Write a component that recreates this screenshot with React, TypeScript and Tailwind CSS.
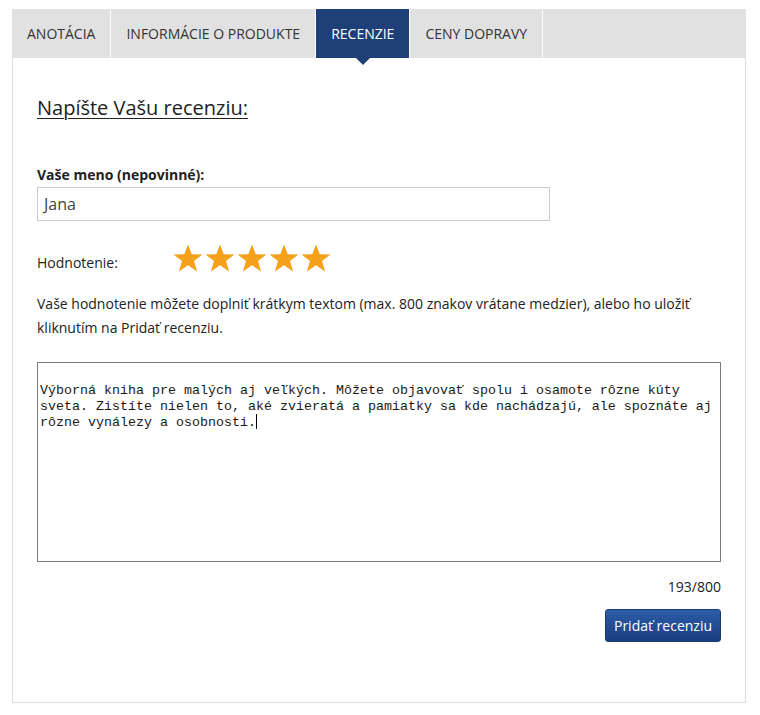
import { useState } from "react";

const tabs = ["ANOTÁCIA", "INFORMÁCIE O PRODUKTE", "RECENZIE", "CENY DOPRAVY"];

const reviewText =
  "Výborná kniha pre malých aj veľkých. Môžete objavovať spolu i osamote rôzne kúty sveta. Zistíte nielen to, aké zvieratá a pamiatky sa kde nachádzajú, ale spoznáte aj rôzne vynálezy a osobnosti.";

function Star() {
  return (
    <svg width="32" height="30" viewBox="0 0 32 30">
      <path
        d="M16 1.5 L19.7 11.3 L30.4 11.6 L22 18.1 L25 28.4 L16 22.3 L7 28.4 L10 18.1 L1.6 11.6 L12.3 11.3 Z"
        fill="#f4a11d"
      />
    </svg>
  );
}

export default function App() {
  const [active, setActive] = useState("RECENZIE");
  const [name] = useState("Jana");

  return (
    <div
      className="min-h-[715px] bg-white pt-[9px] pl-[12px]"
      style={{ fontFamily: "'Open Sans', 'Liberation Sans', sans-serif" }}
    >
      <div className="w-[734px]">
        {/* tabs */}
        <div className="flex h-[49px] bg-[#e1e1e1]">
          {tabs.map((t) => {
            const on = t === active;
            return (
              <button
                type="button"
                key={t}
                onClick={() => setActive(t)}
                className={
                  on
                    ? "relative flex items-center px-[15px] border-r border-white bg-[#1e3f78] text-white text-[14px]"
                    : "relative flex items-center px-[15px] border-r border-white text-[#333] text-[14px]"
                }
              >
                {t}
                {on && (
                  <span className="absolute left-1/2 top-full -translate-x-1/2 w-0 h-0 border-x-[7px] border-x-transparent border-t-[7px] border-t-[#1e3f78]" />
                )}
              </button>
            );
          })}
        </div>

        {/* body */}
        <div className="border-x border-b border-[#dcdcdc] px-[24px] pt-[36px] pb-[60px] text-[#222]">
          <h2 className="text-[20px] leading-[27px] underline underline-offset-[3px] decoration-1">
            Napíšte Vašu recenziu:
          </h2>

          <label className="block mt-[44px] text-[14px] leading-[20px] font-bold">
            Vaše meno (nepovinné):
          </label>
          <div className="mt-[2px] w-[513px] h-[34px] border border-[#cccccc] px-[6px] flex items-center text-[16px] text-[#444]">
            {name}
          </div>

          <div className="mt-[22px] flex items-end">
            <span className="w-[135px] text-[14px] leading-[20px]">Hodnotenie:</span>
            <div className="flex">
              {[0, 1, 2, 3, 4].map((i) => (
                <Star key={i} />
              ))}
            </div>
          </div>

          <p className="mt-[19px] text-[14px] leading-[24px]">
            Vaše hodnotenie môžete doplniť krátkym textom (max. 800 znakov vrátane medzier), alebo ho
            uložiť kliknutím na Pridať recenziu.
          </p>

          <div
            className="mt-[22px] h-[200px] border border-[#7a7a7a] px-[2px] pt-[20px] text-[13.33px] leading-[15.5px] text-[#1a1a1a]"
            style={{ fontFamily: "'Liberation Mono', 'Courier New', monospace" }}
          >
            {reviewText}
            <span className="inline-block w-px h-[15px] bg-black align-[-3px]" />
          </div>

          <div className="mt-[15px] text-right text-[14px] leading-[20px]">193/800</div>

          <div className="mt-[12px] flex justify-end">
            <button
              type="button"
              className="h-[33px] w-[116px] rounded-[3px] border border-[#1a3a74] bg-gradient-to-b from-[#2d5ca8] to-[#1b3e80] text-white text-[14px]"
            >
              Pridať recenziu
            </button>
          </div>
        </div>
      </div>
    </div>
  );
}
